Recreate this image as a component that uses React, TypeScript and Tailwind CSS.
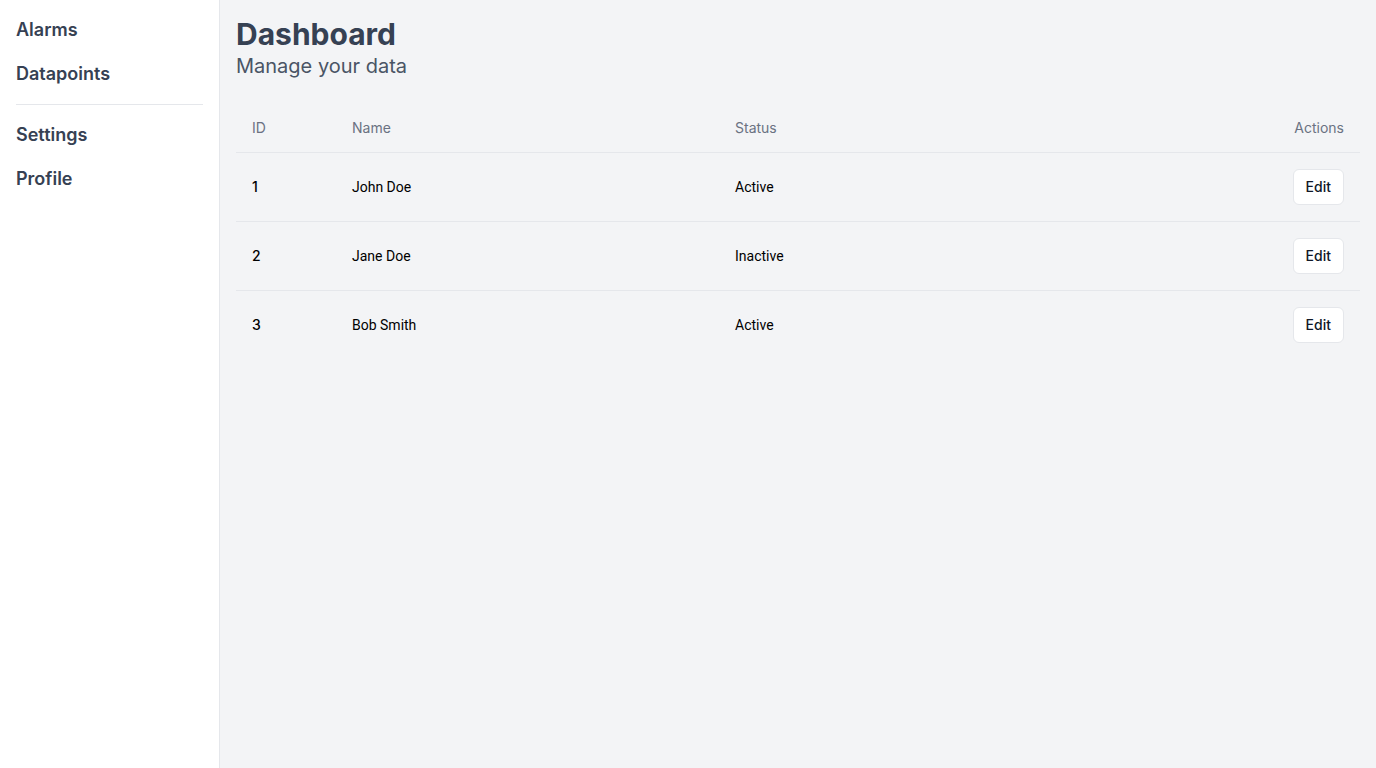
import React from 'react';

const rows = [
  { id: 1, name: 'John Doe', status: 'Active' },
  { id: 2, name: 'Jane Doe', status: 'Inactive' },
  { id: 3, name: 'Bob Smith', status: 'Active' },
];

const navTop = ['Alarms', 'Datapoints'];
const navBottom = ['Settings', 'Profile'];

const App: React.FC = () => {
  return (
    <div className="flex min-h-screen bg-[#f3f4f6] font-['Inter',sans-serif]">
      <aside className="w-[220px] shrink-0 bg-white border-r border-gray-200 px-4 pt-4">
        <nav className="flex flex-col gap-4">
          {navTop.map((item) => (
            <a key={item} className="text-lg font-semibold text-gray-700 leading-7">
              {item}
            </a>
          ))}
        </nav>
        <div className="my-4 border-t border-gray-200" />
        <nav className="flex flex-col gap-4">
          {navBottom.map((item) => (
            <a key={item} className="text-lg font-semibold text-gray-700 leading-7">
              {item}
            </a>
          ))}
        </nav>
      </aside>

      <main className="flex-1 p-4">
        <h1 className="text-3xl font-bold text-gray-700">Dashboard</h1>
        <p className="text-xl text-gray-600">Manage your data</p>

        <div className="mt-6">
          <div className="grid grid-cols-[100px_383px_1fr_auto] border-b border-gray-200 text-sm text-gray-500">
            <div className="px-4 py-3.5">ID</div>
            <div className="px-4 py-3.5">Name</div>
            <div className="px-4 py-3.5">Status</div>
            <div className="px-4 py-3.5 text-right">Actions</div>
          </div>
          {rows.map((row) => (
            <div
              key={row.id}
              className="grid grid-cols-[100px_383px_1fr_auto] items-center border-b border-gray-200 last:border-b-0 text-sm text-black font-['Roboto',sans-serif]"
            >
              <div className="px-4 py-4 font-medium font-['Inter',sans-serif]">{row.id}</div>
              <div className="px-4 py-4">{row.name}</div>
              <div className="px-4 py-4">{row.status}</div>
              <div className="px-4 py-4 flex justify-end">
                <button className="h-9 px-3 rounded-md bg-white border border-gray-200 text-sm font-medium text-gray-900 font-['Inter',sans-serif]">
                  Edit
                </button>
              </div>
            </div>
          ))}
        </div>
      </main>
    </div>
  );
};

export default App;
